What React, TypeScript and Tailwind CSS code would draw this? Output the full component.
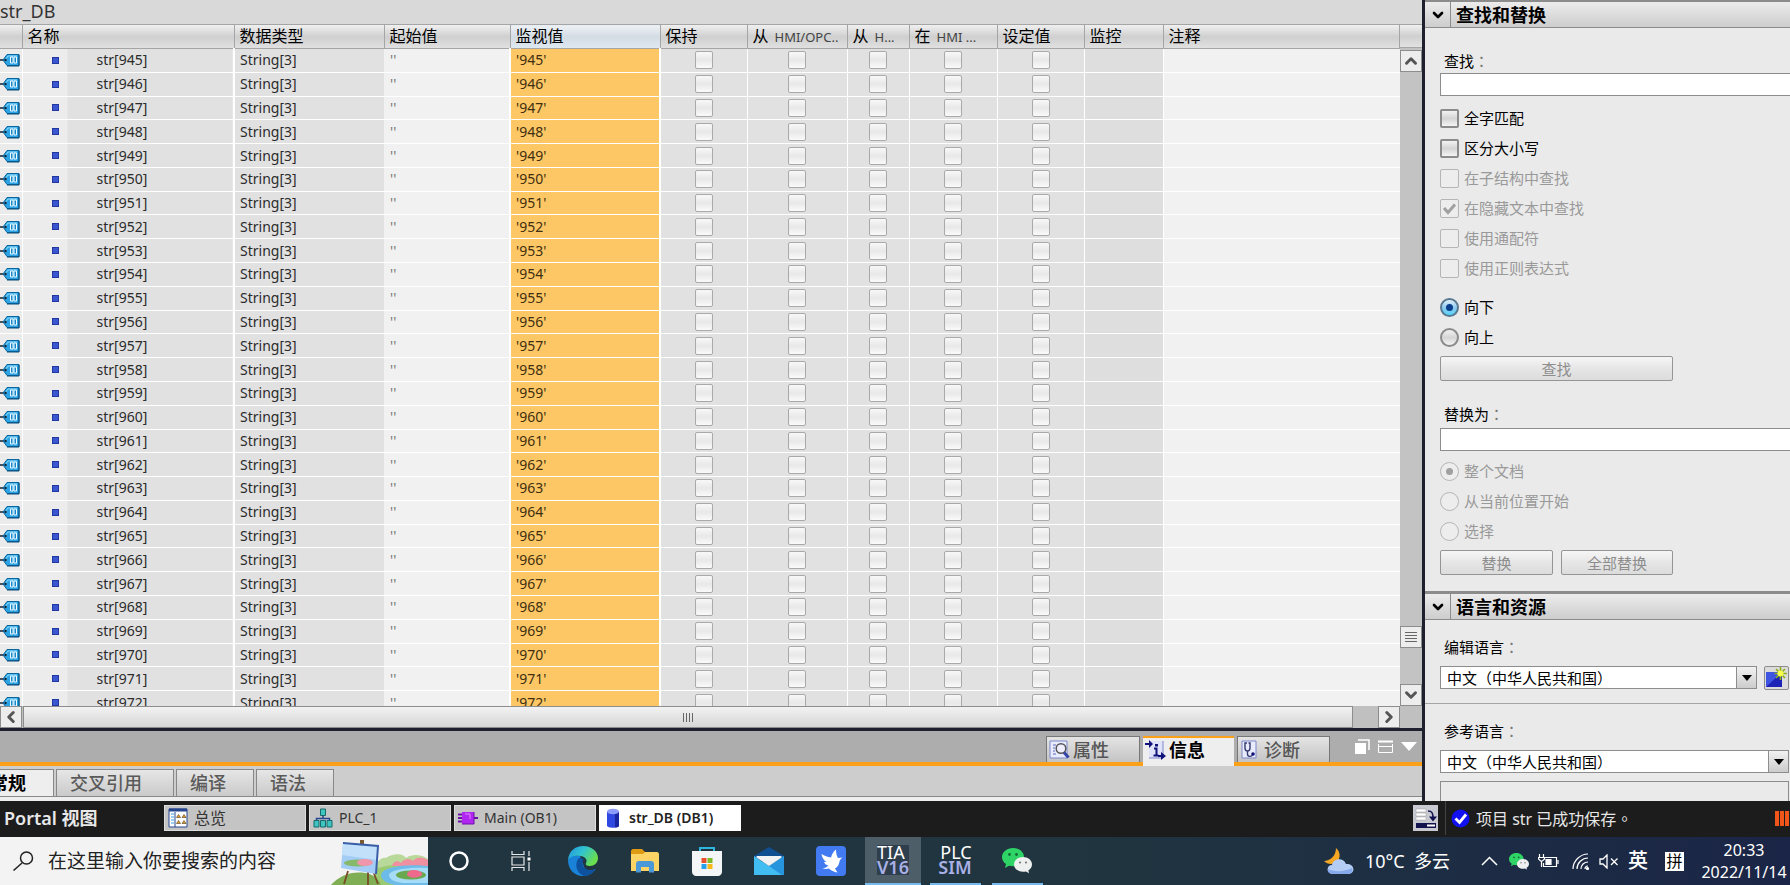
import type { ReactNode } from "react";
import { ChevronDown, ChevronLeft, ChevronRight, ChevronUp } from "lucide-react";

const columns = [
  { label: "", width: "w-[22px]" },
  { label: "名称", width: "w-[212px]" },
  { label: "数据类型", width: "w-[150px]" },
  { label: "起始值", width: "w-[126px]" },
  { label: "监视值", width: "w-[150px]", active: true },
  { label: "保持", width: "w-[87px]" },
  { label: "从", latin: "HMI/OPC..", width: "w-[100px]" },
  { label: "从", latin: "H...", width: "w-[62px]" },
  { label: "在", latin: "HMI ...", width: "w-[88px]" },
  { label: "设定值", width: "w-[87px]" },
  { label: "监控", width: "w-[79px]" },
  { label: "注释", width: "" },
];

const flags = ["保持", "从 HMI/OPC", "从 HMI", "在 HMI", "设定值"];
const rows = Array.from({ length: 28 }, (_, i) => 945 + i);

const headerBg = "bg-linear-to-b from-[#f0f0f0] via-[#cfcfcf] to-[#e2e2e2]";

function TagIcon() {
  return (
    <svg width="20" height="14" viewBox="0 0 20 14" className="block">
      <path d="M0 7h4" stroke="#123" strokeWidth="1.5" />
      <path d="M3 7l4-5.5h12v11H7z" fill="#2ba3e4" stroke="#0b669f" />
      <path d="M5 7l3-4h9" stroke="#8ddcff" fill="none" />
      <circle cx="5.5" cy="7" r="1.2" fill="#123" />
      <path d="M10.500 4H13v6h-2.500zM14 4h2.500v6H14z" fill="#1787c9" stroke="#eefaff" />
      <path d="M19 2v11H7" stroke="#084d7a" fill="none" />
    </svg>
  );
}

function TagTable() {
  return (
    <table className="h-[691px] w-full table-fixed border-collapse text-left text-sm text-[#2b2b2b]">
      <thead>
        <tr className={`h-[24px] ${headerBg}`}>
          {columns.map((c, i) => (
            <th
              key={i}
              className={`h-[24px] overflow-hidden border-y border-r border-[#a5a5a5] p-0 pl-[5px] font-normal whitespace-nowrap text-black ${c.width} ${
                c.active ? "bg-linear-to-b from-[#eef2f6] via-[#d3dbe3] to-[#dfe9f2]" : ""
              }`}
            >
              <span className="text-base leading-[21px]">{c.label}</span>
              {c.latin && <span className="ml-[6px] text-[13px] text-[#444]">{c.latin}</span>}
            </th>
          ))}
        </tr>
      </thead>
      <tbody>
        {rows.map((n) => (
          <tr key={n} className="border-b border-white bg-[#e1e1e1]">
            <td className="border-r border-white bg-[#ebebeb] p-0">
              <TagIcon />
            </td>
            <td className="border-r-2 border-white bg-linear-to-r from-[#ececec] from-[45px] to-[#e1e1e1] to-[45px] p-0">
              <div className="flex items-center leading-[20px]">
                <span className="mr-[38px] ml-[29px] h-[7px] w-[7px] border border-[#2238a0] bg-[#3a56d0]" />
                str[{n}]
              </div>
            </td>
            <td className="p-0 pl-[5px] leading-[20px]">String[3]</td>
            <td className="bg-[#f1f1f1] p-0 pl-[6px] leading-[20px] text-[#777]">''</td>
            <td className="border-x-2 border-white bg-[#fec765] p-0 pl-[5px] leading-[20px] text-[#3f2f10]">'{n}'</td>
            {flags.map((f) => (
              <td key={f} className="border-r border-white p-0">
                <input
                  type="checkbox"
                  disabled
                  aria-label={`str[${n}] ${f}`}
                  className="mx-auto block h-[18px] w-[18px] appearance-none rounded-xs border border-[#a9a9a9] bg-linear-to-b from-[#f8f8f8] via-[#e8e8e8] to-[#fafafa]"
                />
              </td>
            ))}
            <td className="border-r border-white bg-[#dedede] p-0" />
            <td className="bg-[#f1f1f1] p-0" />
          </tr>
        ))}
      </tbody>
    </table>
  );
}

function ScrollButton({ label, children }: { label: string; children: ReactNode }) {
  return (
    <button
      type="button"
      aria-label={label}
      className="flex h-[22px] w-[22px] shrink-0 items-center justify-center border border-[#8d8d8d] bg-[#ededed] text-[#555]"
    >
      {children}
    </button>
  );
}

function Editor() {
  return (
    <section className="flex min-h-0 flex-1 flex-col">
      <h1 className="h-[24px] shrink-0 bg-[#d9d9d9] text-lg leading-[22px] text-[#333]">str_DB</h1>
      <div className="flex min-h-0 flex-1">
        <div className="min-w-0 flex-1 overflow-hidden">
          <TagTable />
        </div>
        <div className="flex w-[22px] shrink-0 flex-col bg-[#c3c3c3]">
          <div className={`mb-[2px] h-[24px] shrink-0 border-y border-[#a5a5a5] ${headerBg}`} />
          <ScrollButton label="向上滚动">
            <ChevronUp size={18} strokeWidth={4} />
          </ScrollButton>
          <div className="mt-auto mb-[36px]">
            <ScrollButton label="滚动条">
              <svg width="12" height="10" stroke="#666">
                <path d="M0 .5h12M0 3.5h12M0 6.5h12M0 9.5h12" />
              </svg>
            </ScrollButton>
          </div>
          <ScrollButton label="向下滚动">
            <ChevronDown size={18} strokeWidth={4} />
          </ScrollButton>
        </div>
      </div>
      <div className="flex h-[22px] shrink-0 bg-[#c0c0c0]">
        <ScrollButton label="向左滚动">
          <ChevronLeft size={18} strokeWidth={4} />
        </ScrollButton>
        <div className="ml-px flex flex-1 items-center justify-center border border-[#8d8d8d] bg-linear-to-b from-[#f2f2f2] to-[#d6d6d6]">
          <svg width="10" height="9" stroke="#666">
            <path d="M.5 0v9M3.5 0v9M6.5 0v9M9.5 0v9" />
          </svg>
        </div>
        <div className="w-[25px]" />
        <ScrollButton label="向右滚动">
          <ChevronRight size={18} strokeWidth={4} />
        </ScrollButton>
        <div className="w-[22px]" />
      </div>
    </section>
  );
}

function PropertiesIcon() {
  return (
    <svg width="21" height="20" viewBox="0 0 21 20">
      <path d="M1 1h17v17H1z" fill="#e8ebfb" stroke="#7d88c9" />
      <path d="M4 5h3M4 8h2M4 11h2M4 14h3" stroke="#5a66c0" />
      <circle cx="12" cy="8.500" r="4.800" fill="#eef" stroke="#555" strokeWidth="1.500" />
      <path d="M15 12.500l4.500 5" stroke="#3444a8" strokeWidth="3" />
    </svg>
  );
}

function InfoIcon() {
  return (
    <svg width="21" height="20" viewBox="0 0 21 20">
      <path d="M4 1h14v17H4z" fill="#dfe3fa" />
      <path d="M18 1v17H4" stroke="#7d88c9" fill="none" />
      <path d="M0 3h4V0l4 4-4 4V5H0zM13 15h3v-3l5 4-5 4v-3h-3z" fill="#11137a" />
      <path d="M9 8.500h2.500V15M8.500 15.500h5" stroke="#11137a" strokeWidth="2" fill="none" />
      <path d="M10 4h3v2.500h-3z" fill="#11137a" />
    </svg>
  );
}

function DiagnosticsIcon() {
  return (
    <svg width="21" height="20" viewBox="0 0 21 20">
      <path d="M2 1h14v17H2z" fill="#e8ebfb" stroke="#7d88c9" />
      <path d="M7 3H5v5c0 2 1 3 2.500 3S10 10 10 8V3H8.500M7.500 11v3c0 3 4 3 5 1" fill="none" stroke="#333b6e" strokeWidth="1.400" />
      <circle cx="13" cy="14" r="1.800" fill="#11137a" />
    </svg>
  );
}

function Inspector() {
  return (
    <section className="shrink-0 border-t-[3px] border-[#1e2030]">
      <div className="flex h-[35px] items-stretch bg-[#adadad] text-lg font-medium">
        <div className="flex-1 border-b-4 border-[#fba019]" />
        <div className="flex border-b-4 border-[#fba019] pt-[5px]">
          <button type="button" className="flex w-[94px] items-center gap-[3px] border border-b-0 border-[#777] bg-linear-to-b from-[#e4e4e4] to-[#c4c4c4] pl-[2px] text-[#555]">
            <PropertiesIcon />
            属性
          </button>
        </div>
        <div className="w-[3px] border-b-4 border-[#fba019]" />
        <div className="flex bg-[#adadad] pt-[5px]">
          <button type="button" className="flex w-[91px] items-center gap-[3px] border-t-2 border-[#fba019] bg-[#eeeeee] pb-[4px] pl-[2px] font-bold text-black">
            <InfoIcon />
            信息
          </button>
        </div>
        <div className="flex border-b-4 border-[#fba019] pt-[5px] pl-[3px]">
          <button type="button" className="flex w-[93px] items-center gap-[3px] border border-b-0 border-[#777] bg-linear-to-b from-[#e4e4e4] to-[#c4c4c4] pl-[2px] text-[#555]">
            <DiagnosticsIcon />
            诊断
          </button>
        </div>
        <div className="flex w-[92px] items-center justify-end gap-[8px] border-b-4 border-[#fba019] pr-[5px]">
          <svg width="15" height="15" fill="#fff">
            <path d="M0 4h11v11H0z" />
            <path d="M3 1h11v10" stroke="#fff" fill="none" strokeWidth="1.500" />
          </svg>
          <svg width="15" height="13" stroke="#fff" fill="none">
            <path d="M0 1.500h15" strokeWidth="2" />
            <path d="M.5 4v8.500h14V4M0 6.500h15" />
          </svg>
          <svg width="16" height="9" fill="#fff">
            <path d="M0 0h16L8 9z" />
          </svg>
        </div>
      </div>
      <div className="flex h-[31px] border-b border-[#888] bg-[#cdcdcd] pt-[3px] text-lg font-medium text-[#5a5a5a]">
        <button type="button" className="flex w-[54px] items-center justify-end border-t border-r border-[#888] bg-[#eeeeee] pr-[27px] font-bold whitespace-nowrap text-black">
          常规
        </button>
        {[
          ["交叉引用", "w-[118px]"],
          ["编译", "w-[78px]"],
          ["语法", "w-[78px]"],
        ].map(([label, width]) => (
          <button
            key={label}
            type="button"
            className={`ml-[2px] flex items-center border border-b-0 border-[#888] bg-linear-to-b from-[#e6e6e6] to-[#cacaca] pl-[13px] ${width}`}
          >
            {label}
          </button>
        ))}
      </div>
      <div className="h-[4px] bg-[#eeeeee]" />
    </section>
  );
}

function PanelHeader({ title }: { title: string }) {
  return (
    <header className="flex h-[28px] border-t-2 border-b border-[#8c8c8c] bg-linear-to-b from-[#ececec] to-[#cdcdcd]">
      <button type="button" aria-label={`折叠 ${title}`} className="flex w-[26px] items-center justify-center border-r border-[#8c8c8c] text-black">
        <ChevronDown size={16} strokeWidth={4} />
      </button>
      <h2 className="pl-[5px] text-lg leading-[26px] font-bold text-black">{title}</h2>
    </header>
  );
}

function FieldLabel({ id, children }: { id: string; children: ReactNode }) {
  return (
    <label htmlFor={id} className="block h-[22px] pl-[4px] leading-[20px]">
      {children}
      <span lang="zh-TW" className="font-['Noto_Sans_CJK_TC',sans-serif] text-[#777]">
        ：
      </span>
    </label>
  );
}

function Option({ type, name, label, checked, disabled }: { type: "checkbox" | "radio"; name?: string; label: string; checked?: boolean; disabled?: boolean }) {
  return (
    <label className={`flex h-[30px] items-center gap-[5px] ${disabled ? "text-[#999]" : "text-black"}`}>
      <span className="grid h-[19px] w-[19px] shrink-0">
        <input
          type={type}
          name={name}
          defaultChecked={checked}
          disabled={disabled}
          className={`col-start-1 row-start-1 h-[19px] w-[19px] appearance-none ${type === "radio" ? "rounded-full" : "rounded-xs"} ${
            disabled
              ? "border border-[#b5b5b5] bg-[#ededed]"
              : "border-2 border-[#8b8b8b] bg-linear-to-b from-[#f2f2f2] via-[#d4d4d4] to-[#f4f4f4] checked:border-[#5a7890] checked:from-[#e4f2fb] checked:via-[#8fcaf0] checked:to-[#4fd5fa]"
          }`}
        />
        {checked && type === "checkbox" && (
          <svg viewBox="0 0 19 19" className="pointer-events-none col-start-1 row-start-1" fill="none" stroke="#a0a0a0" strokeWidth="3">
            <path d="M4 9l4 4.500 7-8" />
          </svg>
        )}
        {checked && type === "radio" && (
          <span className={`pointer-events-none col-start-1 row-start-1 m-auto h-[7px] w-[7px] rounded-full ${disabled ? "bg-[#a0a0a0]" : "bg-[#0b3f8c]"}`} />
        )}
      </span>
      {label}
    </label>
  );
}

const actionButton =
  "h-[25px] rounded-xs border border-[#959595] bg-linear-to-b from-[#f6f6f6] via-[#e6e6e6] to-[#dcdcdc] text-[#8d8d8d] leading-[20px]";

function LanguageSelect({ id }: { id: string }) {
  return (
    <div className="relative h-[23px] flex-1">
      <select id={id} className="block h-[23px] w-full appearance-none border border-[#8d8d8d] bg-white pl-[6px] leading-[20px] text-black">
        <option>中文（中华人民共和国）</option>
      </select>
      <span className="pointer-events-none absolute inset-y-0 right-0 flex w-[21px] items-center justify-center border border-[#8d8d8d] bg-linear-to-b from-[#f2f2f2] to-[#cccccc]">
        <svg width="10" height="6">
          <path d="M0 0h10L5 6z" />
        </svg>
      </span>
    </div>
  );
}

function TaskPane() {
  return (
    <aside className="flex w-[368px] shrink-0 flex-col overflow-hidden border-l-[3px] border-[#1e2030] bg-[#eaeaea] text-[15px] text-black">
      <PanelHeader title="查找和替换" />
      <div className="pt-[23px] pl-[15px]">
        <FieldLabel id="find">查找</FieldLabel>
        <input id="find" className="block h-[23px] w-full border border-r-0 border-[#8d8d8d] bg-white px-[4px]" />
        <div className="pt-[7px]">
          <Option type="checkbox" label="全字匹配" />
          <Option type="checkbox" label="区分大小写" />
          <Option type="checkbox" label="在子结构中查找" disabled />
          <Option type="checkbox" label="在隐藏文本中查找" checked disabled />
          <Option type="checkbox" label="使用通配符" disabled />
          <Option type="checkbox" label="使用正则表达式" disabled />
        </div>
        <div className="pt-[9px]">
          <Option type="radio" name="direction" label="向下" checked />
          <Option type="radio" name="direction" label="向上" />
        </div>
        <button type="button" disabled className={`mt-[4px] block w-[233px] ${actionButton}`}>
          查找
        </button>
        <div className="pt-[23px]">
          <FieldLabel id="replace">替换为</FieldLabel>
          <input id="replace" className="mt-[2px] block h-[23px] w-full border border-r-0 border-[#8d8d8d] bg-white px-[4px]" />
        </div>
        <div className="pt-[5px]">
          <Option type="radio" name="scope" label="整个文档" checked disabled />
          <Option type="radio" name="scope" label="从当前位置开始" disabled />
          <Option type="radio" name="scope" label="选择" disabled />
        </div>
        <div className="flex gap-[8px] pt-[4px] pb-[16px]">
          <button type="button" disabled className={`w-[113px] ${actionButton}`}>
            替换
          </button>
          <button type="button" disabled className={`w-[112px] ${actionButton}`}>
            全部替换
          </button>
        </div>
      </div>
      <div className="border-t border-[#8c8c8c]">
        <PanelHeader title="语言和资源" />
      </div>
      <div className="border-b border-[#a5a5a5] pt-[17px] pr-px pb-[13px] pl-[15px]">
        <FieldLabel id="edit-language">编辑语言</FieldLabel>
        <div className="mt-[7px] flex gap-[7px]">
          <LanguageSelect id="edit-language" />
          <button type="button" aria-label="添加语言" className="flex h-[24px] w-[25px] items-center justify-center rounded-xs border border-[#8d8d8d] bg-[#dcdcdc]">
            <svg width="23" height="22" viewBox="0 0 23 22">
              <path d="M1 5h16v15H1z" fill="#3d55e0" />
              <path d="M1 20L17 5v15z" fill="#1c22b5" />
              <path d="M15.500 0v13M9.500 6.500H22M11 2l9 9M20 2l-9 9" stroke="#8fae1a" strokeWidth="1.600" />
              <circle cx="15.500" cy="6.500" r="3" fill="#f8ff4a" />
            </svg>
          </button>
        </div>
      </div>
      <div className="flex flex-1 flex-col pt-[17px] pr-px pl-[15px]">
        <FieldLabel id="reference-language">参考语言</FieldLabel>
        <div className="mt-[7px] flex">
          <LanguageSelect id="reference-language" />
        </div>
        <div className="mt-[8px] flex-1 border border-b-0 border-[#8d8d8d]" />
      </div>
    </aside>
  );
}

function OverviewIcon() {
  return (
    <svg width="20" height="20" viewBox="0 0 20 20">
      <path d="M1 1h18v18H1z" fill="#fff" stroke="#26458f" />
      <path d="M1 2h18" stroke="#26458f" strokeWidth="3" />
      <path d="M3 6h3M3 9h3M3 12h3M3 15h3" stroke="#3aa0d8" />
      <path d="M7 4v15" stroke="#26458f" />
      <path d="M8.500 9.500h4l-2-3zM14 9.500h4l-2-3zM8.500 15.500h4l-2-3zM14 15.500h4l-2-3z" fill="#e8a02c" stroke="#4a3a1a" strokeWidth=".6" />
    </svg>
  );
}

function PlcIcon() {
  return (
    <svg width="20" height="20" viewBox="0 0 20 20">
      <path d="M10 7v4M3.500 13v-2.500h13V13" stroke="#26458f" strokeWidth="1.500" fill="none" />
      <path d="M7.500 1h5v6.500h-5zM1 12.500h5V19H1zM7.500 12.500h5V19h-5zM14 12.500h5V19h-5z" fill="#3fc5c0" stroke="#17696c" />
    </svg>
  );
}

function BlockIcon() {
  return (
    <svg width="20" height="20" viewBox="0 0 20 20">
      <path d="M0 6.500h5M0 10h5M0 13.500h5M15 10h5" stroke="#6a12a8" strokeWidth="2" />
      <path d="M4 4h12v12H4z" fill="#b125f0" />
      <path d="M4 16h12V4" fill="none" stroke="#6a12a8" />
      <path d="M7 6h5v5" fill="none" stroke="#dd86ff" />
    </svg>
  );
}

function DbIcon() {
  return (
    <svg width="20" height="20" viewBox="0 0 20 20">
      <path d="M4 3.500v14c0 3 12 3 12 0v-14z" fill="#2f48e0" />
      <path d="M12 4v15.500c3 0 4-1 4-2V4z" fill="#1a26a0" />
      <ellipse cx="10" cy="3.500" rx="6" ry="2.800" fill="#8c9cf8" />
    </svg>
  );
}

function StatusBar() {
  const editors = [
    { label: "总览", icon: <OverviewIcon />, size: "text-base" },
    { label: "PLC_1", icon: <PlcIcon />, size: "text-sm" },
    { label: "Main (OB1)", icon: <BlockIcon />, size: "text-sm" },
  ];
  return (
    <nav className="flex h-[36px] shrink-0 items-center bg-[#1c1c1c] pb-[2px]">
      <button type="button" className="w-[164px] pl-[4px] text-left text-lg leading-[24px] font-semibold text-[#e8e8e8]">
        Portal 视图
      </button>
      <div className="flex gap-[3px]">
        {editors.map((e) => (
          <button key={e.label} type="button" className={`flex h-[26px] w-[142px] items-center gap-[6px] border border-[#dddddd] bg-[#c4c4c4] pl-[3px] text-[#333] ${e.size}`}>
            {e.icon}
            {e.label}
          </button>
        ))}
        <button type="button" className="flex h-[26px] w-[142px] items-center gap-[6px] bg-white pl-[4px] text-sm font-semibold text-[#222]">
          <DbIcon />
          str_DB (DB1)
        </button>
      </div>
      <button type="button" aria-label="窗口" className="ml-auto flex h-[26px] w-[25px] items-center justify-center bg-[#c9c9d2]">
        <svg width="22" height="22" viewBox="0 0 22 22">
          <path d="M1 2h10v3H1zM1 6h10v3H1zM1 10h10v3H1z" fill="#fff" stroke="#999" strokeWidth=".5" />
          <path d="M1 16h20v5H1z" fill="#12124e" />
          <path d="M12 17.500h8v2h-8z" fill="#fff" />
          <path d="M13 4c4 0 5 2 5 7" stroke="#12124e" strokeWidth="1.500" fill="none" />
          <path d="M14 9.500h8l-4 5z" fill="#12124e" />
        </svg>
      </button>
      <div className="ml-[7px] flex h-full w-[345px] items-center gap-[6px] border-l border-[#444] pl-[5px] text-base text-[#e6e6e6]">
        <svg width="19" height="19" viewBox="0 0 19 19">
          <circle cx="9.500" cy="9.500" r="9" fill="#1212f0" />
          <path d="M4.500 9.500l4 4 6.500-8" stroke="#fff" strokeWidth="2.800" fill="none" />
        </svg>
        <p>
          项目 str 已成功保存
          <span className="font-['Noto_Sans_CJK_TC',sans-serif]" lang="zh-TW">
            。
          </span>
        </p>
        <svg width="15" height="15" className="ml-auto">
          <path d="M0 0h4v15H0zM5 0h4v15H5zM10 0h4v15h-4z" fill="#f0551a" />
        </svg>
      </div>
    </nav>
  );
}

function WeChatIcon({ size }: { size: number }) {
  return (
    <svg width={size} height={size} viewBox="0 0 30 30">
      <path d="M11 3C5 3 0 7 0 12c0 3 1.600 5.500 4 7l-1 4 4-2.300c1.300.3 2.500.5 4 .5 6 0 11-4.200 11-9.200S17 3 11 3z" fill="#2fd467" />
      <circle cx="7.500" cy="9.500" r="1.400" fill="#116b35" />
      <circle cx="14.500" cy="9.500" r="1.400" fill="#116b35" />
      <path d="M21 12c-5 0-9 3.200-9 7.400s4 7.400 9 7.400c1 0 2-.2 3-.4l3 1.800-.6-3c2.300-1.400 3.600-3.500 3.600-5.800 0-4.200-4-7.400-9-7.400z" fill="#eef0f0" />
      <circle cx="18" cy="17.500" r="1.100" fill="#777" />
      <circle cx="24" cy="17.500" r="1.100" fill="#777" />
    </svg>
  );
}

function SearchArt() {
  return (
    <svg width="97" height="48" viewBox="0 0 97 48" className="ml-auto shrink-0">
      <path d="M44 48V30c2-5 6-10 11-9 8-6 18-4 20 0 7-5 16-3 22 1v26z" fill="#b9d99a" />
      <path d="M44 48V32c16-6 34-4 53-4v20z" fill="#9cca73" />
      <path d="M0 48c8-9 20-14 34-12 8 1 14 6 16 12z" fill="#7fae55" />
      <path d="M61 29c1-5 6-6 9-3 3-5 9-5 12-2 4-5 10-4 15-1v6z" fill="#f08fa0" />
      <path d="M97 29c-18-2-46 0-47 9 0 6 8 9 14 10h33z" fill="#6cbbe8" />
      <path d="M97 31c-16-1-38 1-39 7 0 6 10 8 16 8h23z" fill="#a7dcf6" />
      <ellipse cx="80" cy="38" rx="15" ry="4.500" fill="#6aa850" />
      <path d="M76 38c0-3 3-5 7-5s9 2 8 5c-4 4-13 3-15 0z" fill="#ee6a8c" />
      <path d="M29 3h4v5h-4z" fill="#7a5a2c" />
      <path d="M17 34l-4 13M37 35v13M42 34l5 13" stroke="#7a4b27" strokeWidth="1.800" />
      <path d="M12 6l35 3-2 28-35-6z" fill="#a3cdf6" />
      <path d="M12 6l35 3-1 14-35-5z" fill="#c2e0fa" />
      <path d="M12 6l35 3-2 28" fill="none" stroke="#3a5fa8" strokeWidth="2" />
      <ellipse cx="27" cy="26" rx="14" ry="3.500" fill="#86b96c" />
      <ellipse cx="34" cy="25.500" rx="8" ry="3.500" fill="#f095ac" />
    </svg>
  );
}

function EdgeIcon() {
  return (
    <svg width="30" height="30" viewBox="0 0 30 30">
      <defs>
        <linearGradient id="edge-top" x1="0" x2="1" y1="0" y2=".5">
          <stop offset="0" stopColor="#2392e0" />
          <stop offset=".5" stopColor="#31c3cf" />
          <stop offset="1" stopColor="#6ade4c" />
        </linearGradient>
      </defs>
      <path d="M0 14c0 9 6 16 15 16 6 0 10-3 12.500-7-5 2-9 1.500-11-1L12 10 3 9z" fill="#1a83d8" />
      <path d="M11 12c-5 5-3 15 5 18 5 0 9-3 11.500-7-6 3-13 0-13-6 0-2 .5-3 1.500-4z" fill="#0e519f" />
      <path d="M0 14C1 5 7 0 15 0c9 0 15 6 15 12 0 5-4 8-8 8-3 0-5-1-4-3 2-3-1-7-6-7-5-1-10 0-12 4z" fill="url(#edge-top)" />
    </svg>
  );
}

function Taskbar() {
  const pinned = [
    {
      name: "Cortana",
      icon: (
        <svg width="20" height="20" fill="none" stroke="#fff" strokeWidth="2.500">
          <circle cx="10" cy="10" r="8.500" />
        </svg>
      ),
    },
    {
      name: "任务视图",
      icon: (
        <svg width="20" height="20" fill="none" stroke="#e8e8e8" strokeWidth="1.200">
          <path d="M1 0v3.500h12V0M1 6h12v8H1zM1 20v-3.500h12V20M18 0v5M18 11v9" />
          <path d="M16.500 6.500h3v3h-3z" fill="#fff" stroke="none" />
        </svg>
      ),
    },
    { name: "Edge", icon: <EdgeIcon /> },
    {
      name: "文件资源管理器",
      icon: (
        <svg width="28" height="24" viewBox="0 0 28 24">
          <path d="M0 2c0-1 1-2 2-2h9l3 3h12v6H0z" fill="#dd9a12" />
          <path d="M0 5h12l2-2h12c1 0 2 1 2 2v17H0z" fill="#fbd465" />
          <path d="M5 23.500V15c0-2 1-3 3-3h12c2 0 3 1 3 3v8.500h-5V18h-8v5.500z" fill="#4b98d8" />
        </svg>
      ),
    },
    {
      name: "Microsoft Store",
      icon: (
        <svg width="30" height="30" viewBox="0 0 30 30">
          <path d="M8 6V2h14v4" fill="none" stroke="#2db5dd" strokeWidth="2" />
          <path d="M0 5h30v21c0 2-2 4-4 4H4c-2 0-4-2-4-4z" fill="#f4f5f6" />
          <path d="M9.500 12h5v5h-5z" fill="#e8502e" />
          <path d="M15.500 12h5v5h-5z" fill="#7eb928" />
          <path d="M9.500 18h5v5h-5z" fill="#28a1ec" />
          <path d="M15.500 18h5v5h-5z" fill="#f9b815" />
        </svg>
      ),
    },
    {
      name: "邮件",
      icon: (
        <svg width="30" height="28" viewBox="0 0 30 28">
          <path d="M0 9L15 0l15 9v3H0z" fill="#0f4f91" />
          <path d="M0 9v19h30V9L15 19z" fill="#41bdf2" />
          <path d="M15 19l15-10v19h-2z" fill="#2795de" />
          <path d="M2.500 9h25v1.500L15 19 2.500 10.500z" fill="#f0f2f4" />
        </svg>
      ),
    },
    {
      name: "Bird",
      icon: (
        <svg width="30" height="30" viewBox="0 0 30 30">
          <rect width="30" height="30" rx="4" fill="#427bf1" />
          <path d="M5.500 8c3 2 6 3 9.500 3.500C16 8 17.500 5.500 20 3.500c0 3 .5 6 2 8.500l4.500-.5c-1.500 1-2.500 2-3 4-.5 3.500-2 5.500-4.500 7l2.500 4c-3.500-.5-6.500-2-8.500-4-2 .5-4 .5-6.500 0 2.500-.5 4.500-1.500 6-3-2.500-.5-4-2-4.500-3.500h2.500C7.500 14 6 11.500 5.500 8z" fill="#fff" />
        </svg>
      ),
    },
    {
      name: "TIA V16",
      state: "w-[56px] bg-[#4d5e69]",
      icon: (
        <span className="flex flex-col items-start bg-[#2e3e4d] text-lg leading-[15px] text-white">
          <span>TIA</span>
          <span className="font-semibold text-[#a9b0e6]">V16</span>
        </span>
      ),
    },
    {
      name: "PLC SIM",
      state: "w-[51px]",
      icon: (
        <span className="flex flex-col items-end text-lg leading-[15px] text-white">
          <span>PLC</span>
          <span className="font-semibold text-[#a9b0e6]">SIM</span>
        </span>
      ),
    },
    { name: "微信", state: "w-[51px]", icon: <WeChatIcon size={30} /> },
  ];

  return (
    <footer className="flex h-[48px] shrink-0 bg-linear-to-r from-[#20353f] from-60% to-[#1b2547] text-white">
      <div className="flex w-[428px] items-center bg-[#f3f3f3] pl-[13px]">
        <svg width="21" height="20" fill="none" stroke="#222" strokeWidth="1.500">
          <circle cx="13.500" cy="7" r="6" />
          <path d="M9 12l-8.500 7.500" />
        </svg>
        <input
          aria-label="搜索"
          placeholder="在这里输入你要搜索的内容"
          className="ml-[14px] h-full min-w-0 flex-1 bg-transparent text-[19px] placeholder:text-[#222] placeholder:opacity-100"
        />
        <SearchArt />
      </div>
      <div className="flex">
        {pinned.map((p) => (
          <div key={p.name} className="flex w-[62px] justify-center">
            <button type="button" aria-label={p.name} className={`flex items-center justify-center ${p.state ? `border-b-2 border-[#76b9ed] ${p.state}` : "w-[48px]"}`}>
              {p.icon}
            </button>
          </div>
        ))}
      </div>
      <div className="ml-auto flex items-center">
        <svg width="30" height="27" viewBox="0 0 30 27">
          <path d="M12 0c5 4 5 12-1 15-4 2-8 1-11-2 6 0 12-5 12-13z" fill="#f5a623" />
          <path d="M9 26c-7 0-7-9-1-9 1-7 12-8 14-1 9-1 10 10 2 10z" fill="#b5cdf5" />
          <path d="M9 26c-4 0-6-3-5-5 6 3 16 3 24-1 1 3 0 6-4 6z" fill="#86a9ec" />
        </svg>
        <span className="ml-[11px] w-[100px] text-lg whitespace-nowrap">10°C&nbsp; 多云</span>
        <svg width="17" height="10" className="ml-[16px]" fill="none" stroke="#fff" strokeWidth="1.500">
          <path d="M1 9l7.500-7.500L16 9" />
        </svg>
        <span className="ml-[11px]">
          <WeChatIcon size={20} />
        </span>
        <svg width="21" height="15" className="ml-[9px]" fill="none" stroke="#fff" strokeWidth="1.200">
          <path d="M7 3.500h11.500v9H5.500V9M20 6v4M1.500 0v3M5.500 0v3M.5 3.500h6V5L4.500 7h-2l-2-2zM3.500 7v6" />
          <path d="M8 5.500h5v5H8z" fill="#fff" />
        </svg>
        <svg width="18" height="17" className="ml-[13px]" fill="none" stroke="#fff" strokeWidth="1.200">
          <path d="M1 16C1 8 8 1 16 1M5 16C5 10 10 5 16 5M9 16c0-4 3-7 7-7M13 16c0-2 1-3 3-3" />
          <circle cx="15.500" cy="15.500" r="1" fill="#fff" />
        </svg>
        <svg width="20" height="15" className="ml-[9px]" fill="none" stroke="#fff" strokeWidth="1.300">
          <path d="M1 5h3l4-4v13l-4-4H1zM12 4.500l6.500 6.500M18.500 4.500L12 11" />
        </svg>
        <span className="ml-[9px] text-xl font-medium">英</span>
        <span className="ml-[17px] flex h-[19px] w-[19px] items-center justify-center bg-white text-base leading-[19px] text-black">拼</span>
        <div className="ml-[14px] w-[92px] text-center text-base leading-[22px]">
          <div>20:33</div>
          <div>2022/11/14</div>
        </div>
      </div>
    </footer>
  );
}

export default function App() {
  return (
    <div lang="zh-CN" className="flex h-screen flex-col overflow-hidden bg-[#cdcdcd] font-['Noto_Sans','Noto_Sans_CJK_SC',sans-serif]">
      <div className="flex min-h-0 flex-1">
        <main className="flex min-w-0 flex-1 flex-col">
          <Editor />
          <Inspector />
        </main>
        <TaskPane />
      </div>
      <StatusBar />
      <Taskbar />
    </div>
  );
}
